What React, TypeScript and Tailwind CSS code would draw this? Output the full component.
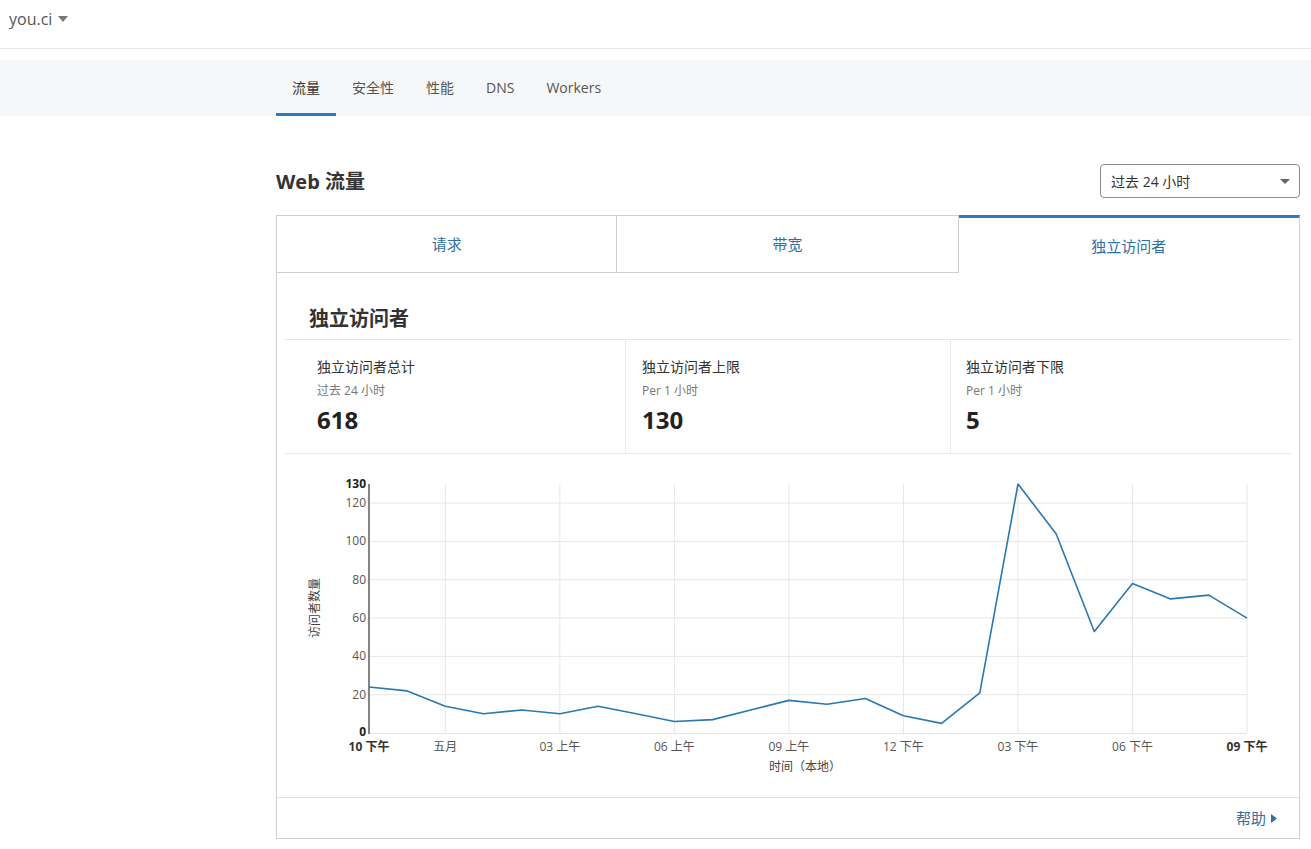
import React from 'react';

const font = { fontFamily: '"Open Sans", "Noto Sans CJK SC", sans-serif' };

const navItems = ['流量', '安全性', '性能', 'DNS', 'Workers'];

const data = [24, 22, 14, 10, 12, 10, 14, 10, 6, 7, 12, 17, 15, 18, 9, 5, 21, 130, 104, 53, 78, 70, 72, 60];

const X0 = 92;
const X1 = 970;
const Y0 = 279;
const Y1 = 30;
const step = (X1 - X0) / 23;
const sx = (i: number) => X0 + i * step;
const sy = (v: number) => Y0 - (v / 130) * (Y0 - Y1);

const xTicks: { i: number; label: string; bold?: boolean }[] = [
  { i: 0, label: '10 下午', bold: true },
  { i: 2, label: '五月' },
  { i: 5, label: '03 上午' },
  { i: 8, label: '06 上午' },
  { i: 11, label: '09 上午' },
  { i: 14, label: '12 下午' },
  { i: 17, label: '03 下午' },
  { i: 20, label: '06 下午' },
  { i: 23, label: '09 下午', bold: true },
];

const yTicks = [0, 20, 40, 60, 80, 100, 120, 130];

const Chart = () => {
  const points = data.map((v, i) => `${sx(i).toFixed(1)},${sy(v).toFixed(1)}`).join(' ');
  return (
    <svg width="1022" height="343" className="block" style={font}>
      {[20, 40, 60, 80, 100, 120].map((v) => (
        <line key={v} x1={X0} x2={X1} y1={sy(v)} y2={sy(v)} stroke="#e6e6e6" strokeWidth="1" />
      ))}
      <line x1={X0} x2={X1} y1={Y0 + 0.5} y2={Y0 + 0.5} stroke="#e6e6e6" strokeWidth="1" />
      {xTicks.slice(1).map((t) => (
        <line key={t.i} x1={sx(t.i)} x2={sx(t.i)} y1={Y1} y2={Y0} stroke="#e6e6e6" strokeWidth="1" />
      ))}
      <line x1={X0} x2={X0} y1={Y1} y2={Y0 + 1} stroke="#333" strokeWidth="1.2" />
      {yTicks.map((v) => (
        <text
          key={v}
          x={X0 - 3}
          y={sy(v) + (v === 0 ? 3 : 4)}
          textAnchor="end"
          fontSize="12"
          fill={v === 0 || v === 130 ? '#222' : '#555'}
          fontWeight={v === 0 || v === 130 ? 700 : 400}
        >
          {v}
        </text>
      ))}
      {xTicks.map((t) => (
        <text
          key={t.i}
          x={sx(t.i)}
          y={297}
          textAnchor="middle"
          fontSize="12"
          fill={t.bold ? '#333' : '#555'}
          fontWeight={t.bold ? 700 : 400}
        >
          {t.label}
        </text>
      ))}
      <text x={528} y={317} textAnchor="middle" fontSize="12" fill="#444">
        时间（本地）
      </text>
      <text
        x={39}
        y={154}
        textAnchor="middle"
        fontSize="12"
        fill="#444"
        transform="rotate(-90 39 154)"
        dominantBaseline="middle"
      >
        访问者数量
      </text>
      <polyline points={points} fill="none" stroke="#2a78b2" strokeWidth="1.6" strokeLinejoin="round" />
    </svg>
  );
};

const Stat = ({ label, sub, value, pad }: { label: string; sub: string; value: string; pad: string }) => (
  <div className={`pt-[17px] ${pad}`}>
    <div className="text-[14px] leading-[20px] text-[#333]">{label}</div>
    <div className="mt-[6px] text-[12px] leading-[16px] text-[#777]">{sub}</div>
    <div className="mt-[4px] text-[24px] leading-[34px] font-bold text-[#222]">{value}</div>
  </div>
);

export default function App() {
  return (
    <div className="min-h-screen bg-white" style={font}>
      <header className="h-[49px] border-b border-[#e8e8e8] px-[9px] pt-[7px]">
        <div className="flex items-center gap-[6px] text-[16px] leading-[24px] text-[#555]">
          you.ci
          <svg width="10" height="6" viewBox="0 0 10 6">
            <path d="M0 0h10L5 6z" fill="#777" />
          </svg>
        </div>
      </header>
      <div className="h-[11px]" />
      <nav className="h-[56px] bg-[#f6f7f8] pl-[276px] flex">
        {navItems.map((n, i) => (
          <div
            key={n}
            className={`h-full flex items-center px-[16px] text-[14px] border-b-[3px] ${
              i === 0 ? 'border-[#2f7bbf] text-[#333]' : 'border-transparent text-[#555]'
            }`}
          >
            <span className="pt-[2px]">{n}</span>
          </div>
        ))}
      </nav>
      <main className="pl-[276px] pr-[11px] pt-[48px] pb-[11px]">
        <div className="flex items-center justify-between">
          <h1 className="text-[20px] font-bold text-[#333] pt-[2px]">Web 流量</h1>
          <div className="w-[200px] h-[34px] border border-[#8c8c8c] rounded-[4px] flex items-center justify-between pl-[10px] pr-[9px] text-[14px] text-[#333]">
            <span>过去 24 小时</span>
            <svg width="10" height="5" viewBox="0 0 10 5">
              <path d="M0 0h10L5 5z" fill="#666" />
            </svg>
          </div>
        </div>
        <div className="mt-[17px] grid grid-cols-3 h-[58px] text-[15px] text-[#2f6fa3]">
          <div className="border border-[#cfcfcf] flex items-center justify-center">请求</div>
          <div className="border-y border-r border-[#cfcfcf] flex items-center justify-center">带宽</div>
          <div className="border-t-[3px] border-t-[#2f7bbf] border-r border-r-[#cfcfcf] flex items-center justify-center pt-[1px]">
            独立访问者
          </div>
        </div>
        <section className="border-x border-b border-[#cfcfcf]">
          <h2 className="h-[66px] pt-[32px] px-[32px] text-[20px] leading-[28px] font-bold text-[#333]">独立访问者</h2>
          <div className="mx-[8px] h-[115px] border-y border-[#e8e8e8] grid grid-cols-[340px_325px_1fr]">
            <Stat label="独立访问者总计" sub="过去 24 小时" value="618" pad="pl-[32px]" />
            <div className="border-l border-[#e8e8e8]">
              <Stat label="独立访问者上限" sub="Per 1 小时" value="130" pad="pl-[16px]" />
            </div>
            <div className="border-l border-[#e8e8e8]">
              <Stat label="独立访问者下限" sub="Per 1 小时" value="5" pad="pl-[15px]" />
            </div>
          </div>
          <Chart />
          <div className="h-[41px] border-t border-[#e0e0e0] flex items-center justify-end pr-[22px] gap-[5px] text-[15px] text-[#2f6fa3]">
            帮助
            <svg width="6" height="9" viewBox="0 0 6 9">
              <path d="M0 0l6 4.5-6 4.5z" fill="#2f6fa3" />
            </svg>
          </div>
        </section>
      </main>
    </div>
  );
}
